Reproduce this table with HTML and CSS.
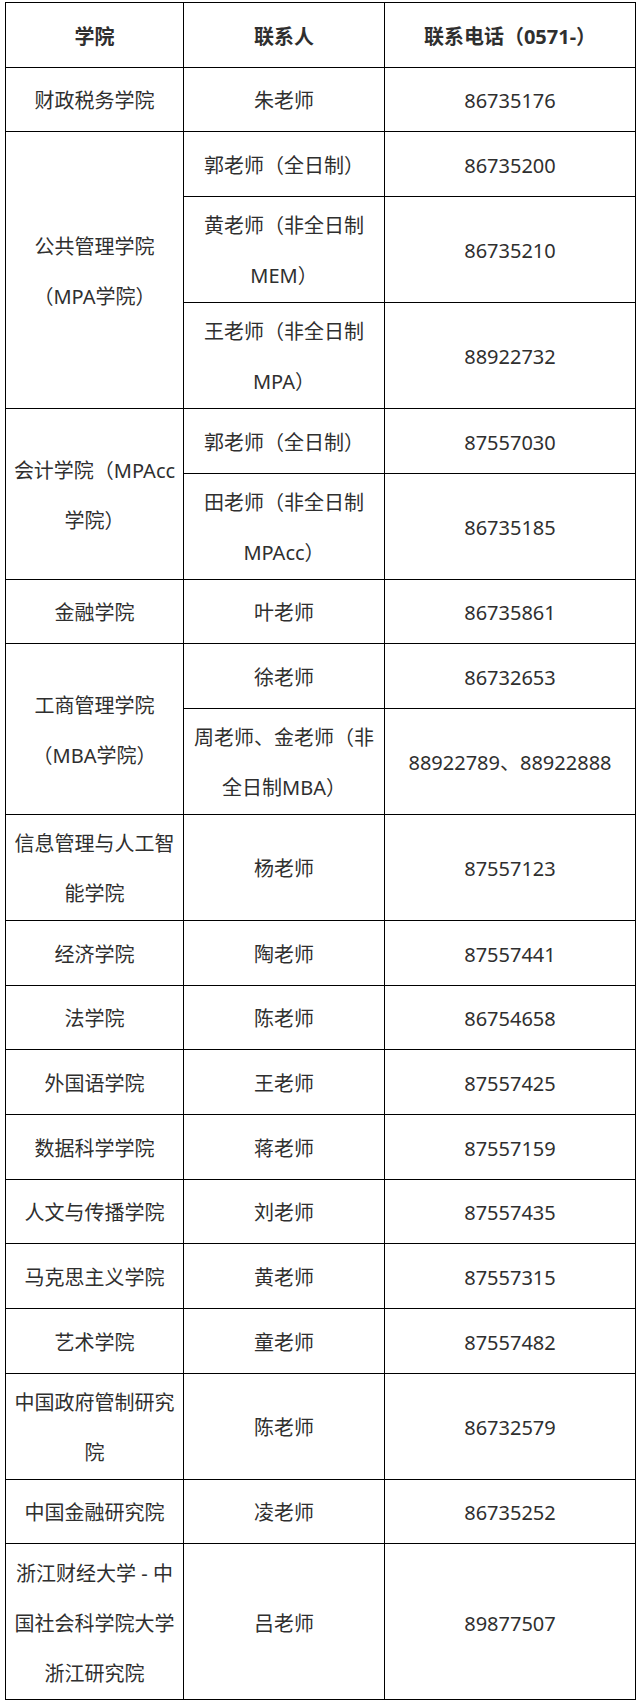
FILE: index.html
```html
<!DOCTYPE html>
<html lang="zh-CN">
<head>
<meta charset="utf-8">
<title>联系方式</title>
<link rel="stylesheet" href="styles.css">
</head>
<body>
<table class="contacts">
  <colgroup>
    <col class="c-college">
    <col class="c-person">
    <col class="c-phone">
  </colgroup>
  <thead>
    <tr>
      <th>学院</th>
      <th>联系人</th>
      <th>联系电话（0571-）</th>
    </tr>
  </thead>
  <tbody>
    <tr><td>财政税务学院</td><td>朱老师</td><td>86735176</td></tr>
    <tr><td rowspan="3">公共管理学院（MPA学院）</td><td>郭老师（全日制）</td><td>86735200</td></tr>
    <tr><td>黄老师（非全日制MEM）</td><td>86735210</td></tr>
    <tr><td>王老师（非全日制MPA）</td><td>88922732</td></tr>
    <tr><td rowspan="2">会计学院（MPAcc学院）</td><td>郭老师（全日制）</td><td>87557030</td></tr>
    <tr><td>田老师（非全日制MPAcc）</td><td>86735185</td></tr>
    <tr><td>金融学院</td><td>叶老师</td><td>86735861</td></tr>
    <tr><td rowspan="2">工商管理学院（MBA学院）</td><td>徐老师</td><td>86732653</td></tr>
    <tr><td>周老师、金老师（非全日制MBA）</td><td>88922789、88922888</td></tr>
    <tr><td>信息管理与人工智能学院</td><td>杨老师</td><td>87557123</td></tr>
    <tr><td>经济学院</td><td>陶老师</td><td>87557441</td></tr>
    <tr><td>法学院</td><td>陈老师</td><td>86754658</td></tr>
    <tr><td>外国语学院</td><td>王老师</td><td>87557425</td></tr>
    <tr><td>数据科学学院</td><td>蒋老师</td><td>87557159</td></tr>
    <tr><td>人文与传播学院</td><td>刘老师</td><td>87557435</td></tr>
    <tr><td>马克思主义学院</td><td>黄老师</td><td>87557315</td></tr>
    <tr><td>艺术学院</td><td>童老师</td><td>87557482</td></tr>
    <tr><td>中国政府管制研究院</td><td>陈老师</td><td>86732579</td></tr>
    <tr><td>中国金融研究院</td><td>凌老师</td><td>86735252</td></tr>
    <tr><td>浙江财经大学 - 中国社会科学院大学浙江研究院</td><td>吕老师</td><td>89877507</td></tr>
  </tbody>
</table>
</body>
</html>
```

FILE: styles.css
```css
html, body {
  margin: 0;
  padding: 0;
  background: #ffffff;
}

body {
  padding: 2px 0 0 5px;
  font-family: "Noto Sans", "Noto Sans CJK SC", sans-serif;
  color: #2f2f2f;
}

.contacts {
  border-collapse: collapse;
  table-layout: fixed;
  width: 630px;
  font-size: 20px;
  line-height: 50px;
}

.c-college { width: 178px; }
.c-person { width: 201px; }
.c-phone { width: 251px; }

.contacts tr {
  height: 64.67px;
}

.contacts th,
.contacts td {
  border: 1px solid #000000;
  padding: 4.5px 5px 0.5px;
  text-align: center;
  vertical-align: middle;
  word-break: normal;
}

.contacts th {
  font-weight: bold;
}

.contacts td {
  font-weight: normal;
}
```
